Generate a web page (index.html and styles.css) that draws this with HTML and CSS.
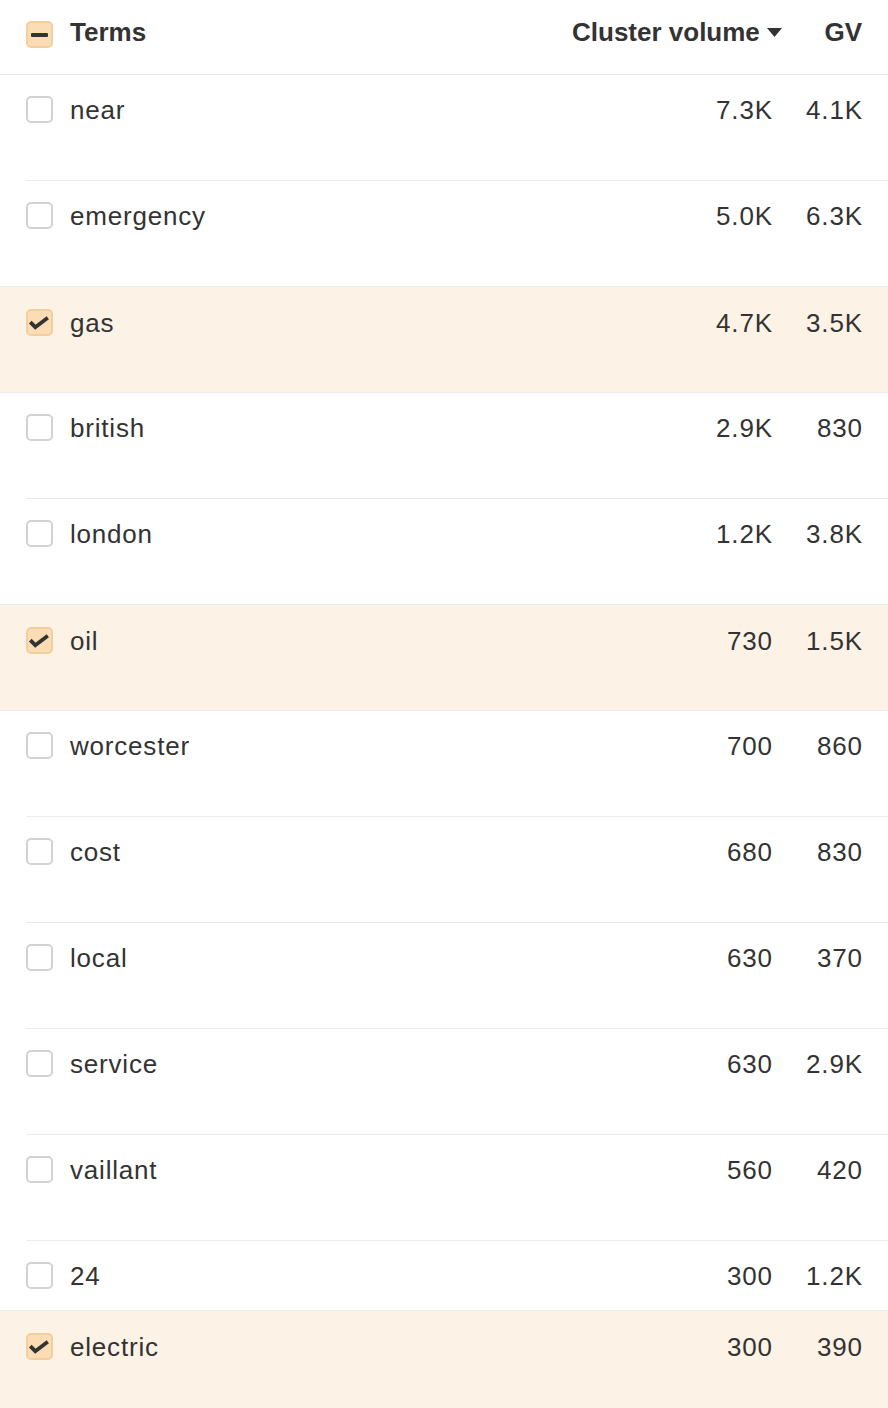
FILE: index.html
```html
<!DOCTYPE html>
<html>
<head>
<meta charset="utf-8">
<link rel="stylesheet" href="styles.css">
</head>
<body>
<div class="table">
  <div class="head">
    <span class="cb cb-on"><span class="dash"></span></span>
    <span class="term">Terms</span>
    <span class="vol">Cluster volume<svg class="caret" width="15" height="9" viewBox="0 0 15 9"><path d="M0 0H15L7.5 9Z" fill="#333"/></svg></span>
    <span class="gv">GV</span>
  </div>

  <div class="row"><span class="cb"></span><span class="term">near</span><span class="vol">7.3K</span><span class="gv">4.1K</span></div>
  <div class="row"><span class="cb"></span><span class="term">emergency</span><span class="vol">5.0K</span><span class="gv">6.3K</span></div>
  <div class="row sel"><span class="cb cb-on"><svg width="27" height="27" viewBox="0 0 27 27"><path d="M4.3 13.2L9.3 18.2L21.8 8.8" fill="none" stroke="#333" stroke-width="3.8" stroke-linejoin="miter"/></svg></span><span class="term">gas</span><span class="vol">4.7K</span><span class="gv">3.5K</span></div>
  <div class="row"><span class="cb"></span><span class="term">british</span><span class="vol">2.9K</span><span class="gv">830</span></div>
  <div class="row"><span class="cb"></span><span class="term">london</span><span class="vol">1.2K</span><span class="gv">3.8K</span></div>
  <div class="row sel"><span class="cb cb-on"><svg width="27" height="27" viewBox="0 0 27 27"><path d="M4.3 13.2L9.3 18.2L21.8 8.8" fill="none" stroke="#333" stroke-width="3.8" stroke-linejoin="miter"/></svg></span><span class="term">oil</span><span class="vol">730</span><span class="gv">1.5K</span></div>
  <div class="row"><span class="cb"></span><span class="term">worcester</span><span class="vol">700</span><span class="gv">860</span></div>
  <div class="row"><span class="cb"></span><span class="term">cost</span><span class="vol">680</span><span class="gv">830</span></div>
  <div class="row"><span class="cb"></span><span class="term">local</span><span class="vol">630</span><span class="gv">370</span></div>
  <div class="row"><span class="cb"></span><span class="term">service</span><span class="vol">630</span><span class="gv">2.9K</span></div>
  <div class="row"><span class="cb"></span><span class="term">vaillant</span><span class="vol">560</span><span class="gv">420</span></div>
  <div class="row short"><span class="cb"></span><span class="term">24</span><span class="vol">300</span><span class="gv">1.2K</span></div>
  <div class="row sel"><span class="cb cb-on"><svg width="27" height="27" viewBox="0 0 27 27"><path d="M4.3 13.2L9.3 18.2L21.8 8.8" fill="none" stroke="#333" stroke-width="3.8" stroke-linejoin="miter"/></svg></span><span class="term">electric</span><span class="vol">300</span><span class="gv">390</span></div>
</div>
</body>
</html>
```

FILE: styles.css
```css
html, body {
  margin: 0;
  padding: 0;
  background: #fff;
}
body {
  font-family: "Liberation Sans", Arial, sans-serif;
  color: #333;
  font-size: 26px;
  overflow: hidden;
}
.table {
  width: 888px;
}
.head, .row {
  display: grid;
  grid-template-columns: 27px 1fr 200px 90px;
  column-gap: 0;
  align-items: start;
  box-sizing: border-box;
  line-height: 38px;
}
.head {
  height: 75px;
  padding: 13px 26px 0 26px;
  border-bottom: 1px solid #e8e8e8;
  font-weight: bold;
}
.head .cb {
  margin-top: 8px;
}
.row {
  height: 106px;
  margin-left: 26px;
  padding: 16px 26px 0 0;
  border-bottom: 1px solid #ebebeb;
  letter-spacing: 0.8px;
}
.row .cb {
  margin-top: 5px;
}
.row.short {
  height: 70px;
}
.row.sel {
  margin-left: 0;
  margin-top: -1px;
  height: 107px;
  padding-left: 26px;
  padding-top: 17px;
  background: #fdf2e6;
  border-top: 1px solid #ebebeb;
}
.cb {
  display: block;
  width: 27px;
  height: 27px;
  box-sizing: border-box;
  border: 2px solid #d2d2d2;
  border-radius: 5px;
  background: #fff;
  margin-top: 6px;
  position: relative;
}
.cb svg {
  position: absolute;
  left: -2px;
  top: -2px;
}
.cb-on {
  background: #fbdcb5;
  border-color: #f1cf9f;
}
.dash {
  position: absolute;
  left: 3px;
  top: 10px;
  width: 17px;
  height: 4px;
  background: #333;
  border-radius: 1px;
}
.term {
  padding-left: 17px;
}
.vol, .gv {
  text-align: right;
  white-space: nowrap;
}
.row .vol, .row .gv {
  margin-right: -0.8px;
}
.head .vol {
  margin-right: -6px;
}
.caret {
  vertical-align: middle;
  margin-left: 7px;
  position: relative;
  top: -2px;
}
```
